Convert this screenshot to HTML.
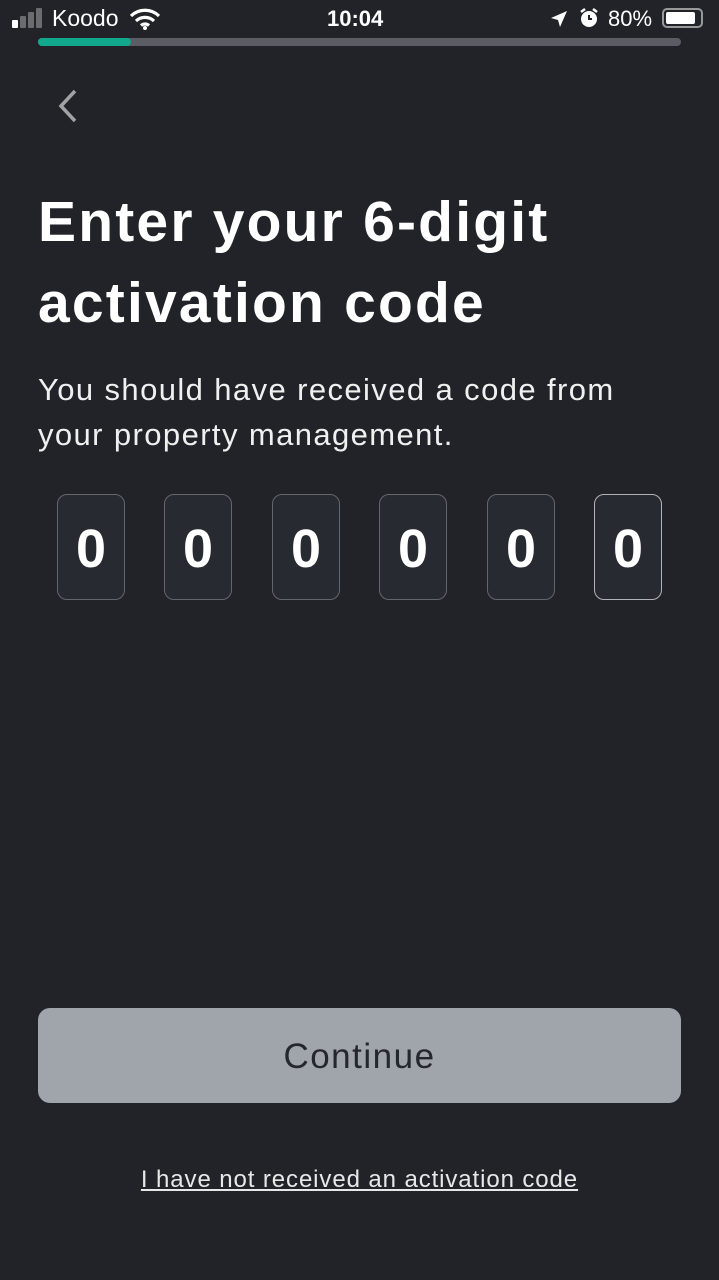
<!DOCTYPE html>
<html><head><style>
body{margin:0;width:719px;height:1280px;background:#212328;font-family:"Liberation Sans",sans-serif;color:#fff;position:relative;overflow:hidden}
.a{position:absolute}
.box{position:absolute;top:494px;width:66px;height:104px;border:1.5px solid #63666d;border-radius:10px;background:#272a30;font-weight:bold;font-size:54px;text-align:center;line-height:108px}
.bar{position:absolute;bottom:0;width:6px;border-radius:1px;background:#6a6c70}
</style></head><body>
<div class="a" style="left:12px;top:8px;width:34px;height:20px">
<div class="bar" style="left:0;height:8px;background:#fff"></div><div class="bar" style="left:8px;height:12px"></div><div class="bar" style="left:16px;height:16px"></div><div class="bar" style="left:24px;height:20px"></div></div>
<div class="a" style="left:52px;top:5px;font-size:23px">Koodo</div>
<svg class="a" style="left:129px;top:8px" width="32" height="22" viewBox="0 0 32 22"><path d="M2 8a20 20 0 0 1 28 0M7 13a13 13 0 0 1 18 0M12 17.5a6 6 0 0 1 8 0" stroke="#fff" stroke-width="3.2" fill="none"/><circle cx="16" cy="20" r="2" fill="#fff"/></svg>
<div class="a" style="left:327px;top:6px;font-size:22px;font-weight:bold">10:04</div>
<svg class="a" style="left:550px;top:10px" width="18" height="18" viewBox="0 0 18 18"><path d="M17 1L1 8l7 2 2 7z" fill="#fff"/></svg>
<svg class="a" style="left:578px;top:7px" width="22" height="22" viewBox="0 0 22 22"><circle cx="11" cy="12" r="8" fill="#fff"/><path d="M3 5l4-3M19 5l-4-3" stroke="#fff" stroke-width="2.5"/><path d="M11 8v4h3" stroke="#212328" stroke-width="2" fill="none"/></svg>
<div class="a" style="left:608px;top:6px;font-size:22px">80%</div>
<div class="a" style="left:662px;top:8px;width:41px;height:20px;border:2px solid #999;border-radius:5px;box-sizing:border-box"><div style="margin:2px;width:29px;height:12px;background:#fff;border-radius:2px"></div></div>
<div class="a" style="left:38px;top:38px;width:643px;height:8px;border-radius:4px;background:#5a5d63"></div>
<div class="a" style="left:38px;top:38px;width:93px;height:8px;border-radius:4px;background:#12a88e"></div>
<svg class="a" style="left:54px;top:88px" width="26" height="36" viewBox="0 0 26 36"><path d="M21 3L7 18l14 15" stroke="#a0a2a6" stroke-width="3.5" fill="none"/></svg>
<div class="a" style="left:38px;top:182px;font-size:57px;font-weight:bold;line-height:81px;letter-spacing:2.2px">Enter your 6-digit<br>activation code</div>
<div class="a" style="left:38px;top:367px;font-size:31px;line-height:45px;color:#f0f0f0;letter-spacing:1.4px">You should have received a code from<br>your property management.</div>
<div class="box" style="left:57px">0</div>
<div class="box" style="left:164px">0</div>
<div class="box" style="left:272px">0</div>
<div class="box" style="left:379px">0</div>
<div class="box" style="left:487px">0</div>
<div class="box" style="left:594px;border-color:#b0b2b6">0</div>
<div class="a" style="left:38px;top:1008px;width:643px;height:95px;border-radius:12px;background:#a0a4ab;color:#24272d;font-size:35px;text-align:center;line-height:97px;letter-spacing:1.5px">Continue</div>
<div class="a" style="left:0;width:719px;top:1166px;text-align:center;font-size:24px;text-decoration:underline;color:#e8e8e8;letter-spacing:0.9px">I have not received an activation code</div>
</body></html>
